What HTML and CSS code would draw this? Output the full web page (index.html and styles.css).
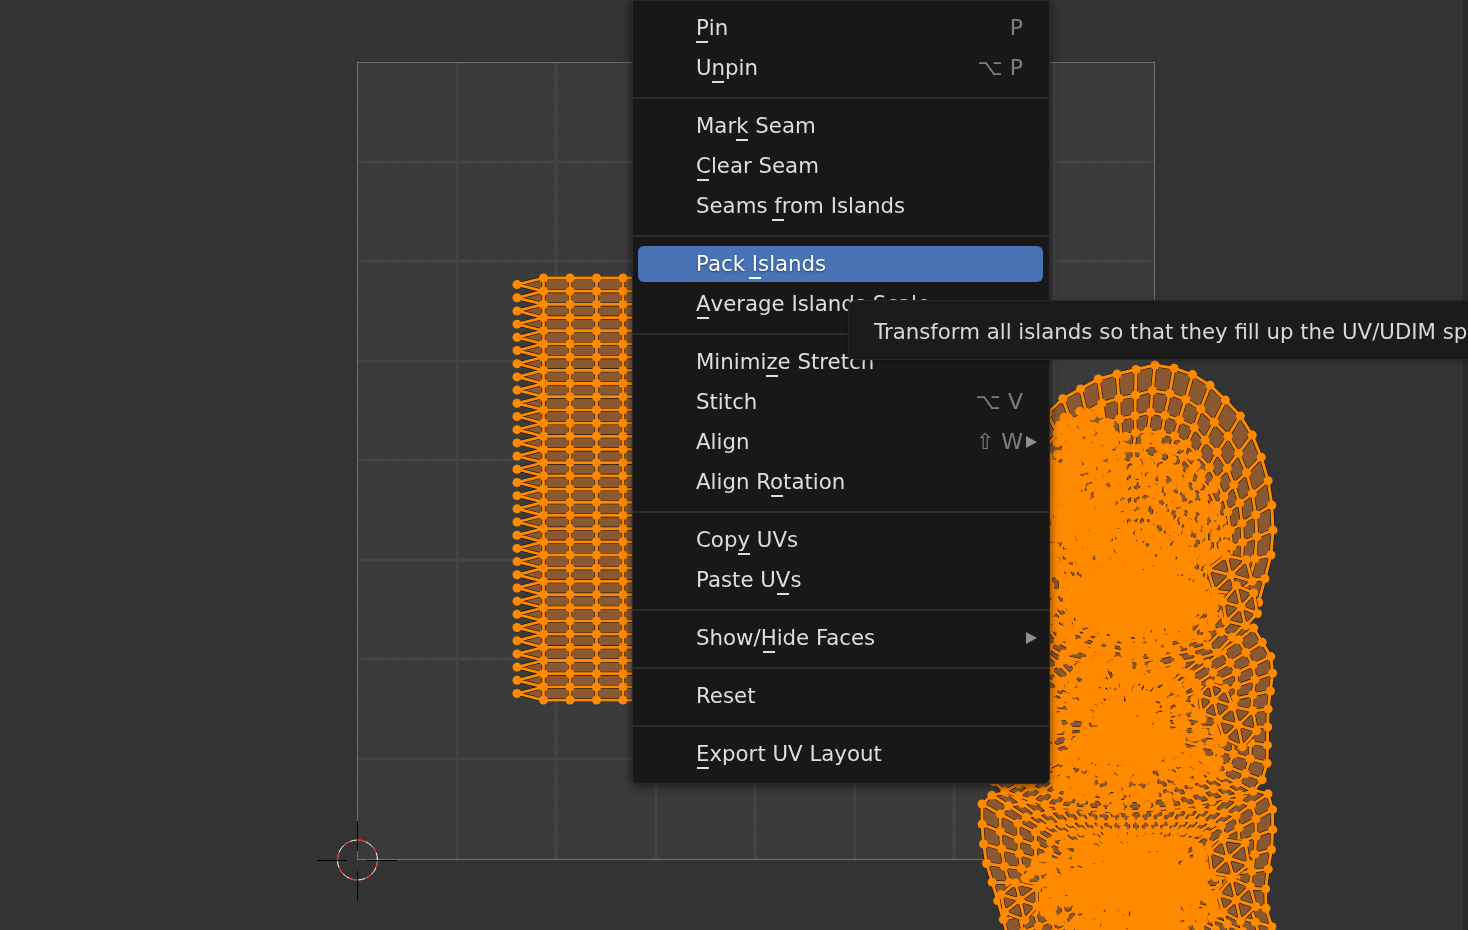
FILE: index.html
```html
<!DOCTYPE html>
<html lang="en">
<head>
<meta charset="utf-8">
<title>UV Editor</title>
<link rel="stylesheet" href="styles.css">
</head>
<body>
<div class="app">
  <main class="editor">
    <canvas id="uv" class="uv-canvas" width="1468" height="930"></canvas>
    <svg class="cursor3d" width="82" height="82" viewBox="0 0 82 82" aria-hidden="true">
      <circle class="ring-white" cx="41.5" cy="41" r="20"/>
      <circle class="ring-red" cx="41.5" cy="41" r="20"/>
      <path class="cross" d="M1 41.5H31M51 41.5H81M41.5 2V32M41.5 52V82"/>
    </svg>
    <nav class="menu">
      <div class="row"><span class="label"><span class="mn">P</span>in</span><span class="key">P</span><span class="slot"></span></div>
      <div class="row"><span class="label">U<span class="mn">n</span>pin</span><span class="key">⌥ P</span><span class="slot"></span></div>
      <div class="sep"></div>
      <div class="row"><span class="label">Mar<span class="mn">k</span> Seam</span><span class="slot"></span></div>
      <div class="row"><span class="label"><span class="mn">C</span>lear Seam</span><span class="slot"></span></div>
      <div class="row"><span class="label">Seams <span class="mn">f</span>rom Islands</span><span class="slot"></span></div>
      <div class="sep"></div>
      <div class="row active"><span class="label">Pack <span class="mn">I</span>slands</span><span class="slot"></span></div>
      <div class="row"><span class="label"><span class="mn">A</span>verage Islands Scale</span><span class="slot"></span></div>
      <div class="sep"></div>
      <div class="row"><span class="label">Minimi<span class="mn">z</span>e Stretch</span><span class="slot"></span></div>
      <div class="row"><span class="label">Stitch</span><span class="key">⌥ V</span><span class="slot"></span></div>
      <div class="row"><span class="label">Align</span><span class="key">⇧ W</span><span class="slot"><i class="arrow"></i></span></div>
      <div class="row"><span class="label">Align R<span class="mn">o</span>tation</span><span class="slot"></span></div>
      <div class="sep"></div>
      <div class="row"><span class="label">Cop<span class="mn">y</span> UVs</span><span class="slot"></span></div>
      <div class="row"><span class="label">Paste U<span class="mn">V</span>s</span><span class="slot"></span></div>
      <div class="sep"></div>
      <div class="row"><span class="label">Show/<span class="mn">H</span>ide Faces</span><span class="slot"><i class="arrow"></i></span></div>
      <div class="sep"></div>
      <div class="row"><span class="label">Reset</span><span class="slot"></span></div>
      <div class="sep"></div>
      <div class="row"><span class="label"><span class="mn">E</span>xport UV Layout</span><span class="slot"></span></div>
    </nav>
    <div class="tooltip">Transform all islands so that they fill up the UV/UDIM space</div>
  </main>
  <div class="edge"></div>
</div>
<script src="script.js"></script>
</body>
</html>
```
FILE: styles.css
```css
* { box-sizing: border-box; }
html, body { margin: 0; height: 100%; overflow: hidden; }
body {
  background: #333333;
  font-family: "DejaVu Sans", sans-serif;
  font-size: 21.3px;
  color: #dedede;
}
.app { display: flex; width: 1468px; height: 930px; overflow: hidden; }
.editor { position: relative; flex: 1; background: #333333; }
.edge { width: 5px; background: #282828; }
.uv-canvas { position: absolute; left: 0; top: 0; display: block; }
.cursor3d { position: absolute; left: 316px; top: 819px; }
.ring-white { fill: none; stroke: #ffffff; stroke-width: 1; }
.ring-red { fill: none; stroke: #ff0000; stroke-width: 1; stroke-dasharray: 7.85 7.85; }
.cross { fill: none; stroke: #000000; stroke-width: 1; }

.menu {
  position: absolute;
  left: 632px;
  top: 0;
  width: 418px;
  height: 784px;
  display: flex;
  flex-direction: column;
  padding: 7px 0 9px;
  background: #181818;
  border: 1px solid #2a2a2a;
  border-bottom-left-radius: 6px;
  border-bottom-right-radius: 6px;
  box-shadow: 0 2px 10px rgba(0, 0, 0, 0.6);
}
.row {
  display: flex;
  align-items: center;
  flex: none;
  height: 36px;
  margin: 2px 6px 2px 5px;
  padding: 0 6px 0 58px;
  border-radius: 6px;
  white-space: nowrap;
  line-height: 36px;
}
.row.active {
  background: #4772b3;
  color: #ffffff;
  text-shadow: 0 1px 2px rgba(0, 0, 0, 0.45);
}
.label { flex: 1; }
.key { color: #7d7d7d; font-size: 22px; }
.slot { flex: none; width: 14px; display: flex; justify-content: flex-end; }
.arrow {
  display: block;
  width: 0;
  height: 0;
  border-left: 11px solid #8f8f8f;
  border-top: 6px solid transparent;
  border-bottom: 6px solid transparent;
}
.mn { position: relative; }
.mn::after {
  content: "";
  position: absolute;
  left: 50%;
  bottom: -3px;
  width: 12px;
  height: 2px;
  margin-left: -6px;
  background: currentColor;
}
.sep {
  flex: none;
  height: 2px;
  margin: 9px 0 7px;
  background: #2d2d2d;
}
.tooltip {
  position: absolute;
  left: 848px;
  top: 300px;
  width: 700px;
  height: 60px;
  padding: 0 0 0 25px;
  line-height: 62px;
  white-space: nowrap;
  background: #1b1b1b;
  border: 1px solid #272727;
  border-radius: 8px;
  color: #d8d8d8;
  box-shadow: 0 1px 4px rgba(0, 0, 0, 0.3);
}
```
FILE: script.js
```js
(function () {
  var c = document.getElementById('uv').getContext('2d');
  var ORANGE = '#ff8a00', FACE = '#8a5831', DARK = 'rgba(14,9,4,0.85)';
  var seed = 7;
  function rnd() { seed = (seed * 16807) % 2147483647; return seed / 2147483647; }

  /* background grid of the UV square */
  var X0 = 358, Y0 = 63, S = 796, STEP = S / 8;
  c.fillStyle = '#3a3a3a';
  c.fillRect(X0, Y0, S, S);
  c.fillStyle = '#3d3d3d';
  for (var i = 1; i < 64; i++) {
    var d = Math.round(i * S / 64);
    c.fillRect(X0 + d, Y0, 1, S);
    c.fillRect(X0, Y0 + d, S, 1);
  }
  for (i = 1; i < 8; i++) {
    var m = Math.round(i * STEP) - 2;
    c.fillStyle = '#3e3e3e';
    c.fillRect(X0 + m - 1, Y0, 4, S);
    c.fillRect(X0, Y0 + m - 1, S, 4);
    c.fillStyle = '#454545';
    c.fillRect(X0 + m, Y0, 2, S);
    c.fillRect(X0, Y0 + m, S, 2);
  }
  c.fillStyle = '#707070';
  c.fillRect(X0 - 1, Y0 - 1, S + 2, 1);
  c.fillRect(X0 - 1, Y0 + S, S + 2, 1);
  c.fillRect(X0 - 1, Y0 - 1, 1, S + 2);
  c.fillRect(X0 + S, Y0 - 1, 1, S + 2);

  function drawMesh(faces, edges, verts, r, ew) {
    c.lineJoin = 'round'; c.lineCap = 'round';
    c.fillStyle = FACE;
    faces.forEach(function (f) {
      c.beginPath();
      f.forEach(function (p, i) { if (i) c.lineTo(p[0], p[1]); else c.moveTo(p[0], p[1]); });
      c.closePath(); c.fill();
    });
    function strokeAll(col, w) {
      c.strokeStyle = col; c.lineWidth = w; c.beginPath();
      edges.forEach(function (e) { c.moveTo(e[0][0], e[0][1]); c.lineTo(e[1][0], e[1][1]); });
      c.stroke();
    }
    strokeAll(DARK, ew + 1.2);
    strokeAll(ORANGE, ew);
    c.fillStyle = ORANGE;
    verts.forEach(function (p) {
      c.beginPath(); c.arc(p[0], p[1], r, 0, Math.PI * 2); c.fill();
    });
  }

  /* left island: a ladder with a zig-zag fringe */
  (function () {
    var xs = [543.5, 570, 596.5, 623, 649.5], top = 278, dy = 13.19, rows = 33;
    var F = [], E = [], V = [];
    for (var r = 0; r < rows; r++) {
      var y = top + r * dy;
      for (var k = 0; k < xs.length; k++) {
        V.push([xs[k], y]);
        if (k < xs.length - 1) E.push([[xs[k], y], [xs[k + 1], y]]);
        if (r < rows - 1) {
          E.push([[xs[k], y], [xs[k], y + dy]]);
          if (k < xs.length - 1) F.push([[xs[k], y], [xs[k + 1], y], [xs[k + 1], y + dy], [xs[k], y + dy]]);
        }
      }
      if (r < rows - 1) {
        var L = [517, y + dy / 2];
        V.push(L);
        E.push([L, [xs[0], y]]); E.push([L, [xs[0], y + dy]]);
        F.push([L, [xs[0], y], [xs[0], y + dy]]);
      }
    }
    drawMesh(F, E, V, 4.5, 2.8);
  })();

  /* resample a closed polygon at even (weighted) arc length */
  function resample(poly, n, wx) {
    var seg = [], tot = 0, i;
    for (i = 0; i < poly.length; i++) {
      var a = poly[i], b = poly[(i + 1) % poly.length];
      var l = Math.hypot((b[0] - a[0]) * wx, b[1] - a[1]);
      seg.push(l); tot += l;
    }
    var out = [], idx = 0, acc = 0;
    for (i = 0; i < n; i++) {
      var t = tot * i / n;
      while (acc + seg[idx] < t) { acc += seg[idx]; idx++; }
      var u = (t - acc) / seg[idx], p = poly[idx], q = poly[(idx + 1) % poly.length];
      out.push([p[0] + (q[0] - p[0]) * u, p[1] + (q[1] - p[1]) * u]);
    }
    return out;
  }

  /* a concentric quad mesh: outer contour shrinking towards a centre */
  function rings(poly, cx, cy, n, wx, rhos, jit) {
    var outer = resample(poly, n, wx), grid = [], F = [], E = [], V = [];
    rhos.forEach(function (rho, ri) {
      var j = jit * Math.min(1, ri / 5);
      grid.push(outer.map(function (p) {
        return [cx + (p[0] - cx) * rho + (rnd() - 0.5) * j, cy + (p[1] - cy) * rho + (rnd() - 0.5) * j];
      }));
    });
    for (var r = 0; r < grid.length; r++) {
      for (var i = 0; i < n; i++) {
        var a = grid[r][i], b = grid[r][(i + 1) % n];
        V.push(a); E.push([a, b]);
        if (r < grid.length - 1) {
          var d = grid[r + 1][i], e = grid[r + 1][(i + 1) % n];
          E.push([a, d]); F.push([a, b, e, d]);
        }
      }
    }
    return { F: F, E: E, V: V };
  }

  var ringsHead = [1, .885, .79, .71, .645, .59, .54, .49, .44, .39, .34, .29, .24, .19, .14, .09, .04];
  var ringsMid = [1, .88, .76, .64, .52, .4, .28, .16, .06];
  var ringsBottom = [1, .88, .76, .65, .55, .46, .38, .3, .22, .14, .06];

  var bottom = rings([
    [1130, 786], [1240, 786], [1272, 795], [1273, 822], [1272, 847], [1268, 870], [1264, 902], [1272, 927],
    [1285, 975], [1210, 1030], [1130, 1045], [1050, 1030], [1015, 965], [1003, 918], [993, 885], [985, 858], [982, 829], [982, 797], [1040, 786]
  ], 1133, 886, 57, 1.3, ringsBottom, 2.5);
  var mid = rings([
    [1130, 612], [1225, 618], [1252, 625], [1262, 642], [1274, 662], [1268, 710], [1267, 768], [1258, 790],
    [1190, 806], [1125, 812], [1050, 806], [1000, 790], [985, 770], [985, 660], [1030, 622]
  ], 1125, 725, 56, 1.3, ringsMid, 3.5);
  var head = rings([
    [1155, 365], [1185, 370], [1213, 387], [1247, 423], [1260, 453], [1270, 487], [1272, 507], [1273, 530], [1271, 555],
    [1262, 590], [1256, 612], [1215, 655], [1135, 672], [1055, 655], [1010, 600], [1000, 520], [1025, 440], [1057, 402], [1100, 378]
  ], 1132, 590, 42, 1.3, ringsHead, 4);

  [bottom, mid, head].forEach(function (m) { drawMesh(m.F, m.E, m.V, 4.5, 3); });

  /* scattered vertices and solid cores of the crowded middle of the mesh */
  function crowd(cx, cy, rx, ry, n) {
    c.fillStyle = ORANGE;
    for (var i = 0; i < n; i++) {
      var t = rnd() * Math.PI * 2, q = Math.sqrt(rnd());
      c.beginPath();
      c.arc(cx + Math.cos(t) * q * rx, cy + Math.sin(t) * q * ry, 4.5, 0, Math.PI * 2);
      c.fill();
    }
  }
  function core(cx, cy, rx, ry) {
    c.fillStyle = ORANGE;
    c.beginPath();
    c.ellipse(cx, cy, rx, ry, 0, 0, Math.PI * 2);
    c.fill();
  }
  crowd(1125, 555, 105, 130, 620);
  crowd(1085, 480, 40, 75, 220);
  crowd(1125, 735, 105, 75, 420);
  crowd(1130, 885, 110, 52, 420);
  core(1135, 600, 72, 30);
  core(1125, 745, 55, 20);
  core(1135, 885, 72, 26);

  /* star poles along the seams */
  function star(cx, cy, rad, n) {
    var E = [], V = [[cx, cy]], F = [], pts = [];
    for (var i = 0; i < n; i++) {
      var t = i / n * Math.PI * 2 + 0.3;
      pts.push([cx + Math.cos(t) * rad * (0.85 + rnd() * 0.3), cy + Math.sin(t) * rad * (0.85 + rnd() * 0.3)]);
    }
    pts.forEach(function (p, i) {
      var q = pts[(i + 1) % n];
      E.push([[cx, cy], p]); E.push([p, q]); V.push(p);
      F.push([[cx, cy], p, q]);
    });
    drawMesh(F, E, V, 4.5, 3);
  }
  star(1231, 575, 22, 6); star(1241, 607, 20, 6);
  star(1238, 725, 20, 6); star(1214, 700, 18, 6);
  star(1228, 858, 22, 6); star(1236, 900, 20, 6); star(1020, 900, 20, 6);
})();
```
